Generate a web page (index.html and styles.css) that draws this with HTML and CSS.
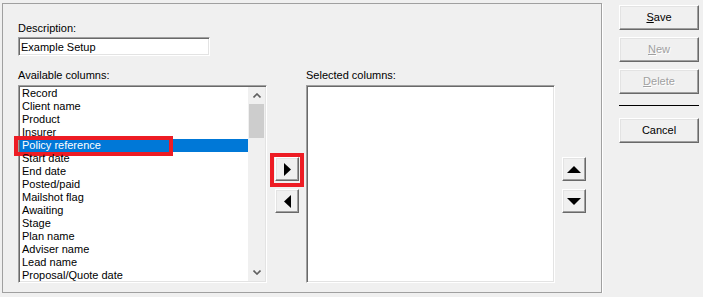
FILE: index.html
```html
<!DOCTYPE html>
<html lang="en">
  <head>
    <meta charset="UTF-8" />
    <title>Column setup</title>
    <link rel="stylesheet" href="styles.css">
  </head>
  <body>
    <div class="dialog">
      <section class="panel">
        <label class="caption" for="description">Description:</label>
        <input type="text" id="description" class="text-field" value="Example Setup" />
        <div class="columns">
          <div class="column">
            <p class="caption">Available columns:</p>
            <div class="listbox">
              <ul class="list-items">
                <li>Record</li>
                <li>Client name</li>
                <li>Product</li>
                <li>Insurer</li>
                <li class="selected">Policy reference<span class="highlight"></span></li>
                <li>Start date</li>
                <li>End date</li>
                <li>Posted/paid</li>
                <li>Mailshot flag</li>
                <li>Awaiting</li>
                <li>Stage</li>
                <li>Plan name</li>
                <li>Adviser name</li>
                <li>Lead name</li>
                <li>Proposal/Quote date</li>
              </ul>
              <div class="scrollbar">
                <div class="sb-button">
                  <svg width="8" height="5" viewBox="0 0 8 5"><polyline points="0.5,4.5 4,1 7.5,4.5" fill="none" stroke="#606060" stroke-width="1.6" /></svg>
                </div>
                <div class="sb-track"><div class="sb-thumb"></div></div>
                <div class="sb-button">
                  <svg width="8" height="5" viewBox="0 0 8 5"><polyline points="0.5,0.5 4,4 7.5,0.5" fill="none" stroke="#606060" stroke-width="1.6" /></svg>
                </div>
              </div>
            </div>
          </div>
          <!-- move between lists -->
          <div class="move-buttons">
            <button class="btn arrow-btn marked">
              <svg width="7" height="13" viewBox="0 0 7 13"><polygon points="0,0 7,6.5 0,13" fill="#000" /></svg>
            </button>
            <button class="btn arrow-btn">
              <svg width="7" height="13" viewBox="0 0 7 13"><polygon points="7,0 0,6.5 7,13" fill="#000" /></svg>
            </button>
          </div>
          <div class="column">
            <p class="caption">Selected columns:</p>
            <div class="listbox"></div>
          </div>
          <!-- reorder -->
          <div class="order-buttons">
            <button class="btn arrow-btn">
              <svg width="14" height="7" viewBox="0 0 14 7"><polygon points="0,7 7,0 14,7" fill="#000" /></svg>
            </button>
            <button class="btn arrow-btn">
              <svg width="14" height="7" viewBox="0 0 14 7"><polygon points="0,0 14,0 7,7" fill="#000" /></svg>
            </button>
          </div>
        </div>
      </section>
      <aside class="actions">
        <button class="btn action"><u>S</u>ave</button>
        <button class="btn action" disabled><u>N</u>ew</button>
        <button class="btn action" disabled><u>D</u>elete</button>
        <hr class="separator" />
        <button class="btn action">Cancel</button>
      </aside>
    </div>
  </body>
</html>
```

FILE: styles.css
```css
*,
*::before,
*::after {
  box-sizing: border-box;
}
body {
  margin: 0;
  background-color: #f0f0f0;
  font-family: "Liberation Sans", Arial, sans-serif;
  font-size: 11px;
  line-height: 13px;
  color: #000;
}
.dialog {
  display: flex;
  align-items: flex-start;
  padding: 3px 0 0 2px;
}
.panel {
  width: 600px;
  height: 290px;
  padding: 18px 0 0 15px;
  border: 1px solid #a0a0a0;
  box-shadow: 1px 1px 0 #fff;
}
.caption {
  display: block;
  margin: 0;
  height: 13px;
}
.text-field {
  display: block;
  width: 192px;
  height: 19px;
  margin-top: 2px;
  padding: 0 2px;
  font: inherit;
  border: 1px solid;
  border-color: #a0a0a0 #fff #fff #a0a0a0;
  box-shadow: inset 1px 1px #696969, inset -1px -1px #e3e3e3;
  background: #fff;
  outline: none;
}
.columns {
  display: flex;
  align-items: flex-start;
  margin-top: 13px;
}
.column {
  width: 249px;
}
.listbox {
  display: flex;
  width: 249px;
  height: 198px;
  margin-top: 3px;
  padding: 1px;
  border: 1px solid;
  border-color: #a0a0a0 #fff #fff #a0a0a0;
  box-shadow: inset 1px 1px #696969, inset -1px -1px #e3e3e3;
  background: #fff;
}
.list-items {
  flex: 1;
  margin: 0;
  padding: 0;
  list-style: none;
}
.list-items li {
  position: relative;
  height: 13px;
  padding-left: 2px;
  white-space: nowrap;
}
.list-items li:last-child {
  height: 12px;
  overflow: hidden;
}
.list-items li.selected {
  background-color: #0078d7;
  color: #fff;
}
.highlight {
  position: absolute;
  left: -6px;
  top: -3px;
  width: 159px;
  height: 20px;
  border: 4px solid #ed1c24;
  pointer-events: none;
}
.scrollbar {
  display: flex;
  flex-direction: column;
  width: 17px;
  background: #f0f0f0;
}
.sb-button {
  display: flex;
  align-items: center;
  justify-content: center;
  height: 17px;
}
.sb-track {
  flex: 1;
  padding: 0 1px;
}
.sb-thumb {
  height: 34px;
  background: #cdcdcd;
}
.btn {
  display: flex;
  align-items: center;
  justify-content: center;
  padding: 0;
  font: inherit;
  color: #000;
  background: #f0f0f0;
  border: 1px solid;
  border-color: #fff #696969 #696969 #fff;
  box-shadow: inset -1px -1px #a0a0a0, inset 1px 1px #e3e3e3;
  outline: none;
}
.btn:disabled {
  color: #a0a0a0;
  text-shadow: 1px 1px #fff;
}
.move-buttons,
.order-buttons {
  display: flex;
  flex-direction: column;
  gap: 8px;
  margin-top: 88px;
}
.move-buttons {
  margin-left: 8px;
  margin-right: 7px;
}
.order-buttons {
  margin-left: 7px;
}
.arrow-btn {
  width: 24px;
  height: 24px;
}
.marked {
  position: relative;
}
.marked::after {
  content: "";
  position: absolute;
  left: -6px;
  top: -5px;
  width: 34px;
  height: 34px;
  border: 4px solid #ed1c24;
}
.actions {
  display: flex;
  flex-direction: column;
  width: 80px;
  margin: 2px 0 0 17px;
}
.action {
  height: 25px;
  margin-bottom: 7px;
}
.separator {
  height: 1px;
  margin: 4px 0 12px;
  border: 0;
  background: #000;
}
```
